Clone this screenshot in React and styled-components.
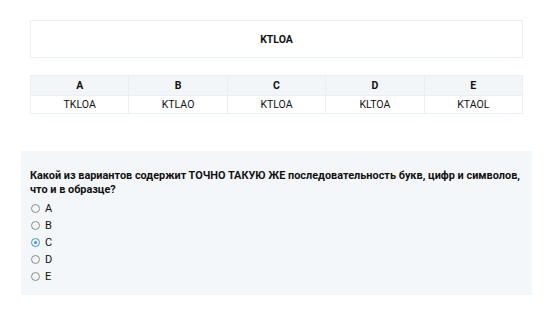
import styled, { createGlobalStyle } from "styled-components";

const options = ["A", "B", "C", "D", "E"];
const answers = ["TKLOA", "KTLAO", "KTLOA", "KLTOA", "KTAOL"];
const selected = "C";

const App = () => {
  return (
    <>
      <GlobalStyle />
      <Page>
        <SampleBox>KTLOA</SampleBox>
        <Table>
          <thead>
            <tr>
              {options.map((o) => (
                <HeadCell key={o}>{o}</HeadCell>
              ))}
            </tr>
          </thead>
          <tbody>
            <tr>
              {answers.map((a, i) => (
                <Cell key={i}>{a}</Cell>
              ))}
            </tr>
          </tbody>
        </Table>
        <QuestionPanel>
          <Question>
            Какой из вариантов содержит ТОЧНО ТАКУЮ ЖЕ последовательность букв, цифр и символов,
            что и в образце?
          </Question>
          <OptionList>
            {options.map((o) => (
              <OptionRow key={o}>
                <Radio $checked={o === selected} />
                {o}
              </OptionRow>
            ))}
          </OptionList>
        </QuestionPanel>
      </Page>
    </>
  );
};

export default App;

const GlobalStyle = createGlobalStyle`
  body {
    margin: 0;
    background: #fff;
    font-family: Roboto, "Noto Sans", sans-serif;
    color: #111;
  }
`;

const Page = styled.div`
  display: flex;
  flex-direction: column;
  padding: 20px 31px 0 30px;
`;

const SampleBox = styled.div`
  height: 36px;
  border: 1px solid #e9f0f4;
  display: flex;
  align-items: center;
  justify-content: center;
  font-size: 10.5px;
  font-weight: 700;
`;

const Table = styled.table`
  margin-top: 17px;
  border-collapse: collapse;
  table-layout: fixed;
  width: 100%;
`;

const HeadCell = styled.th`
  height: 19px;
  padding: 0;
  background: #f3f6f8;
  border: 1px solid #e9f0f4;
  font-size: 10.5px;
  font-weight: 700;
  text-align: center;
`;

const Cell = styled.td`
  height: 17px;
  padding: 0;
  border: 1px solid #e9f0f4;
  font-size: 10.5px;
  text-align: center;
`;

const QuestionPanel = styled.div`
  margin: 37px -9px 0 -9px;
  background: #f4f7f9;
  padding: 18px 9px 10px 9px;
`;

const Question = styled.div`
  font-size: 10.9px;
  font-weight: 700;
  line-height: 14px;
`;

const OptionList = styled.div`
  margin-top: 3px;
  display: flex;
  flex-direction: column;
`;

const OptionRow = styled.label`
  display: flex;
  align-items: center;
  height: 17px;
  font-size: 11px;
`;

const Radio = styled.span`
  width: 7px;
  height: 7px;
  border-radius: 50%;
  border: 1px solid ${(p) => (p.$checked ? "#3a97e6" : "#8a8a8a")};
  margin: 0 5px 0 1px;
  display: flex;
  align-items: center;
  justify-content: center;
  &::after {
    content: "";
    width: 3px;
    height: 3px;
    border-radius: 50%;
    background: ${(p) => (p.$checked ? "#3a97e6" : "transparent")};
  }
`;
